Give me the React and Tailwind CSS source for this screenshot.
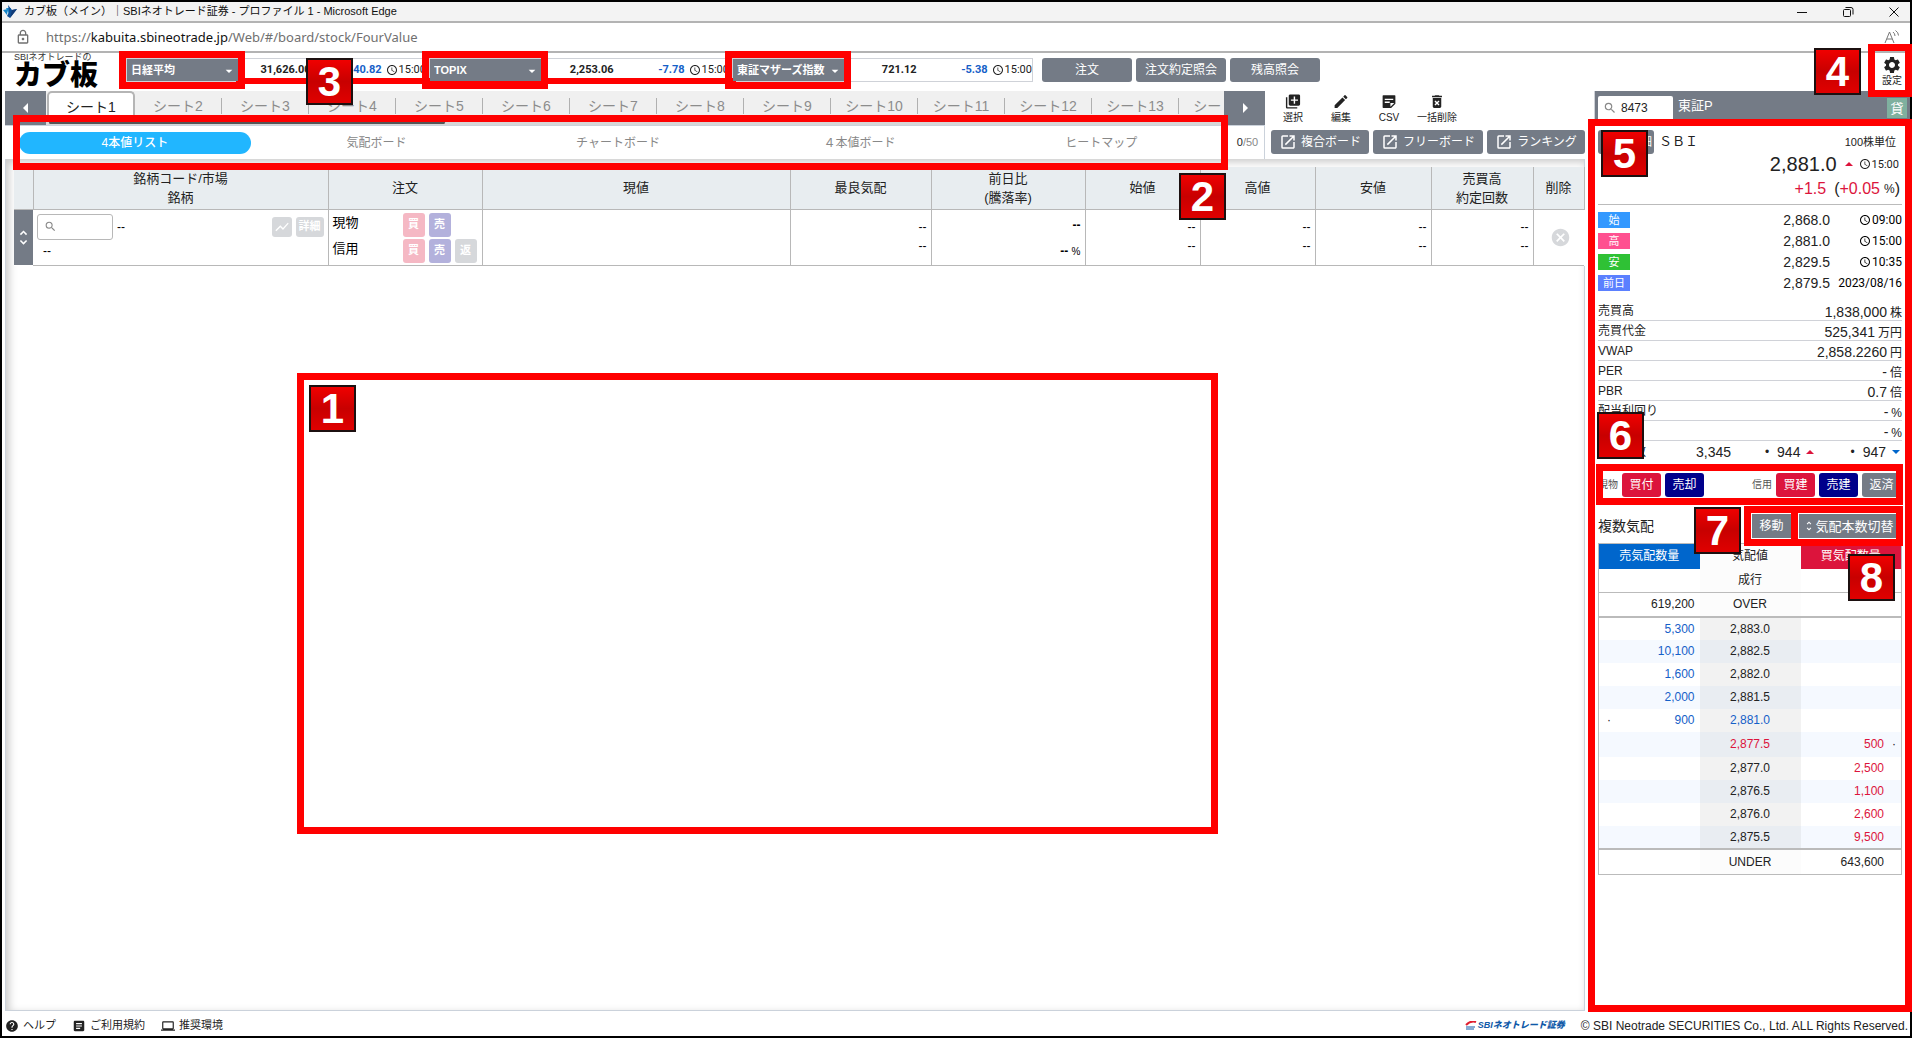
import React from "react";
import {
  MdLibraryAdd, MdEdit, MdDeleteForever, MdAccessTime, MdSettings, MdSearch, MdOpenInNew,
  MdHelp, MdArticle, MdLaptop, MdShowChart, MdUnfoldMore, MdCancel, MdArrowLeft, MdArrowRight,
  MdArrowDropDown, MdOutlineLock,
} from "react-icons/md";

const INDICES = [
  { id: "nikkei", name: "日経平均", value: "31,626.00", change: "-140.82" },
  { id: "topix", name: "TOPIX", value: "2,253.06", change: "-7.78" },
  { id: "mothers", name: "東証マザーズ指数", value: "721.12", change: "-5.38" },
];
const SHEETS = Array.from({ length: 14 }, (_, i) => `シート${i + 1}`);
const VIEWS = ["4本値リスト", "気配ボード", "チャートボード", "４本値ボード", "ヒートマップ"];
const OHLC = [
  { label: "始", value: "2,868.0", time: "09:00", color: "bg-[#3399ff]" },
  { label: "高", value: "2,881.0", time: "15:00", color: "bg-[#ff5090]" },
  { label: "安", value: "2,829.5", time: "10:35", color: "bg-[#2fc135]" },
  { label: "前日", value: "2,879.5", date: "2023/08/16", color: "bg-[#5b80ff]" },
];
const STATS = [
  ["売買高", "1,838,000", "株"],
  ["売買代金", "525,341", "万円"],
  ["VWAP", "2,858.2260", "円"],
  ["PER", "-", "倍"],
  ["PBR", "0.7", "倍"],
  ["配当利回り", "-", "%"],
  ["ROE", "-", "%"],
];
const ASKS = [["5,300", "2,883.0"], ["10,100", "2,882.5"], ["1,600", "2,882.0"], ["2,000", "2,881.5"], ["900", "2,881.0"]];
const BIDS = [["2,877.5", "500"], ["2,877.0", "2,500"], ["2,876.5", "1,100"], ["2,876.0", "2,600"], ["2,875.5", "9,500"]];

function Badge({ n, className }) {
  return (
    <span
      className={`absolute z-30 flex size-[47px] items-center justify-center border-2 border-[#1c1010] bg-linear-to-b from-[#f00000] via-[#c80000] to-[#e00000] font-['Liberation_Sans'] text-[42px] leading-none font-bold text-white ${className}`}
    >
      {n}
    </span>
  );
}

function Frame({ className }) {
  return <span aria-hidden="true" className={`pointer-events-none absolute z-20 border-[7px] border-[#ff0000] ${className}`} />;
}

function Clock() {
  return <MdAccessTime className="mr-px size-3 shrink-0" />;
}

function CsvIcon() {
  return (
    <svg viewBox="0 0 24 24" className="size-[18px]" fill="currentColor">
      <path fillRule="evenodd" d="M4 3h16a1 1 0 0 1 1 1v11l-6 6H4a1 1 0 0 1-1-1V4a1 1 0 0 1 1-1zm2 5v2h12V8zm0 4v2h7v-2zm8 7.5 5.500-5.500H14z" />
    </svg>
  );
}

function EdgeIcon() {
  return (
    <svg viewBox="0 0 14 14" className="size-[14px]">
      <path d="M3 3h5l-2 6z" fill="#1b8fd0" />
      <path d="M0 5l5-1-1 6z" fill="#1686c9" />
      <path d="M5 0l4 5 5-1-7 9-3-2 2-4z" fill="#0f4f96" />
      <path d="M9 5l5-1-7 9z" fill="#123c78" />
    </svg>
  );
}

function TitleBar() {
  return (
    <div className="flex h-[21px] shrink-0 items-center border-b-2 border-[#b3b3b3] bg-[#f3f3f3] pl-px text-[11px] text-[#111]">
      <EdgeIcon />
      <span className="ml-[7px] flex-1 whitespace-nowrap">カブ板（メイン）｜SBIネオトレード証券 - プロファイル 1 - Microsoft Edge</span>
      <div className="flex gap-8 pr-[9px]">
        <button aria-label="最小化" className="flex size-[14px] items-center justify-center">
          <svg viewBox="0 0 12 12" className="size-3" stroke="#111" fill="none"><path d="M1 6.500h10" /></svg>
        </button>
        <button aria-label="元に戻す" className="flex size-[14px] items-center justify-center">
          <svg viewBox="0 0 12 12" className="size-3" stroke="#111" fill="none">
            <rect x="1.500" y="3.500" width="7" height="7" rx="1" /><path d="M3.500 1.500H9a2 2 0 0 1 2 2v5" />
          </svg>
        </button>
        <button aria-label="閉じる" className="flex size-[14px] items-center justify-center">
          <svg viewBox="0 0 12 12" className="size-3" stroke="#111" fill="none"><path d="M1.500 1.500l9 9M10.500 1.500l-9 9" /></svg>
        </button>
      </div>
    </div>
  );
}

function AddressBar() {
  return (
    <div className="flex h-[30px] shrink-0 items-center border-b-2 border-[#b3b3b3] bg-white pr-[10px] pl-[13px] text-[#707070]">
      <MdOutlineLock className="size-4" />
      <a href="#board" className="ml-[15px] flex-1 pt-px font-['Noto_Sans'] text-[13px]">
        https://<span className="text-[#111]">kabuita.sbineotrade.jp</span>/Web/#/board/stock/FourValue
      </a>
      <button aria-label="音声で読み上げる">
        <svg viewBox="0 0 16 16" className="size-4" stroke="#777" fill="none">
          <path d="M1 14 5.500 3 10 14M2.800 10h5.500M9 3q2 1.500 2 4M11.500 1.500q3 2 3 5" />
        </svg>
      </button>
    </div>
  );
}

function IndexTicker({ item }) {
  return (
    <div className="relative flex h-6 w-[301px] border border-[#cfd2d8] font-['Roboto'] text-[11px]">
      <div className="relative z-10 w-[111px] text-white">
        <select aria-label="指数" id={item.id} defaultValue={item.name} className="h-full w-full appearance-none bg-[#747b86] pl-1 font-['Liberation_Sans','Noto_Sans_CJK_JP',sans-serif] font-bold outline-none">
          <option>{item.name}</option>
        </select>
        <MdArrowDropDown className="pointer-events-none absolute top-1 right-px size-4" />
      </div>
      <div className="flex flex-1 items-center whitespace-nowrap">
        <span className="w-[73px] text-right font-bold text-[#222]">{item.value}</span>
        <span className="w-[71px] text-right font-bold text-[#1560c8]">{item.change}</span>
        <span className="ml-1 flex items-center text-[#222]"><Clock />15:00</span>
      </div>
      <Frame className="-top-[8px] -left-[8px] h-[38px] w-[126px]" />
    </div>
  );
}

function AppHeader() {
  return (
    <header className="relative flex h-[38px] shrink-0 items-start">
      <h1 className="flex w-[124px] shrink-0 flex-col pl-3">
        <span className="text-[9px] leading-[8px] whitespace-nowrap text-[#333]">SBIネオトレードの</span>
        <span className="text-[28px] leading-[30px] font-black whitespace-nowrap text-black">カブ板</span>
      </h1>
      <div className="relative mt-[5px] flex gap-[2px]">
        <span aria-hidden="true" className="absolute top-[20px] left-[110px] z-10 h-[6px] w-[500px] bg-[#ff0000]" />
        {INDICES.map((i) => <IndexTicker key={i.id} item={i} />)}
        <Badge n="3" className="top-0 left-[180px]" />
      </div>
      <div className="mt-[5px] ml-[9px] flex gap-1">
        {["注文", "注文約定照会", "残高照会"].map((t) => (
          <button key={t} className="h-6 w-[90px] rounded-[3px] bg-[#747b86] text-xs leading-none text-white">{t}</button>
        ))}
      </div>
      <button className="absolute top-[2px] right-[8px] flex flex-col items-center text-[10px] leading-[12px] text-[#222]">
        <MdSettings className="size-5" />設定
      </button>
      <Frame className="-top-[9px] -right-[2px] h-[53px] w-[44px]" />
      <Badge n="4" className="-top-[5px] right-[49px]" />
    </header>
  );
}

function SheetTabs() {
  const arrow = "flex h-[34px] w-[41px] shrink-0 items-center justify-center bg-[#747b86] text-white";
  return (
    <div className="flex h-[34px]">
      <button aria-label="前へ" className={arrow}><MdArrowLeft className="size-6" /></button>
      <div className="flex min-w-0 flex-1 flex-col overflow-hidden bg-[#f0f0f0]">
        <div role="tablist" className="flex h-[30px] pl-px">
          {SHEETS.map((s, i) => (
            <button
              key={s}
              role="tab"
              aria-selected={i === 0}
              className={i === 0
                ? "h-full w-[88px] shrink-0 rounded-t-[5px] border-2 border-b-0 border-[#b5b5b5] bg-white text-sm leading-none text-[#222]"
                : "flex h-full w-[87px] shrink-0 items-center justify-center text-sm leading-none text-[#8c8c8c]"}
            >
              {i === 0 ? s : <span className="w-full border-r border-[#b0b0b0] py-px">{s}</span>}
            </button>
          ))}
        </div>
        <div className="h-1 bg-[#d6d6d6]"><div className="ml-[3px] h-[3px] w-[396px] rounded-full bg-[#555]" /></div>
      </div>
      <button aria-label="次へ" className={arrow}><MdArrowRight className="size-6" /></button>
    </div>
  );
}

function ViewTabs() {
  return (
    <div className="flex h-[34px] items-center border-t border-r border-[#cbd2db] bg-white pl-[9px]">
      <div role="tablist" className="flex flex-1">
        {VIEWS.map((v, i) => (
          <button
            key={v}
            role="tab"
            aria-selected={i === 0}
            className={i === 0
              ? "mx-[5px] h-[22px] flex-1 rounded-full bg-[#21b6ff] text-xs leading-none font-medium text-white"
              : "mx-[5px] h-[22px] flex-1 text-xs leading-none text-[#888]"}
          >
            {v}
          </button>
        ))}
      </div>
      <span className="w-[42px] pl-[9px] text-center text-[11px] text-[#888]"><span className="text-[#222]">0</span>/50</span>
    </div>
  );
}

function Toolbar() {
  const tools = [
    ["選択", <MdLibraryAdd className="size-[18px]" />],
    ["編集", <MdEdit className="size-[18px]" />],
    ["CSV", <CsvIcon />],
    ["一括削除", <MdDeleteForever className="size-[18px]" />],
  ];
  const btn = "flex h-6 items-center justify-center gap-1 rounded-[3px] bg-[#747b86] text-xs leading-none whitespace-nowrap text-white";
  return (
    <div className="w-[320px] shrink-0">
      <div className="flex h-[34px] pl-1">
        {tools.map(([t, icon]) => (
          <button key={t} className="flex w-12 flex-col items-center gap-px pt-[2px] text-[10px] leading-[14px] whitespace-nowrap text-[#222]">{icon}{t}</button>
        ))}
      </div>
      <div className="flex h-[34px] items-center gap-1 border-b border-transparent pl-[6px]">
        <button className={`${btn} w-[98px]`}><MdOpenInNew className="size-[18px]" />複合ボード</button>
        <button className={`${btn} w-[110px]`}><MdOpenInNew className="size-[18px]" />フリーボード</button>
        <button className={`${btn} w-[98px]`}><MdOpenInNew className="size-[18px]" />ランキング</button>
      </div>
    </div>
  );
}

function Chip({ children, className }) {
  return <button className={`h-6 w-[22px] rounded-[3px] text-[11px] leading-none font-bold text-white ${className}`}>{children}</button>;
}

function QuoteTable() {
  const th = "h-[42px] border-r border-b border-[#b8b8b8] bg-[#e8edf0] p-0 text-[13px] leading-[19px] font-normal text-[#222]";
  const td = "border-r border-b border-[#b8b8b8] py-0 px-1 align-top text-right text-xs leading-[19px]";
  return (
    <table className="w-full table-fixed border-collapse bg-white">
      <colgroup>
        <col className="w-[19px]" /><col className="w-[295px]" /><col className="w-[154px]" /><col className="w-[308px]" />
        <col className="w-[141px]" /><col className="w-[154px]" /><col className="w-[115px]" /><col className="w-[115px]" />
        <col className="w-[116px]" /><col className="w-[102px]" /><col className="w-[51px]" />
      </colgroup>
      <thead>
        <tr>
          <th className={th} aria-label="並べ替え" />
          <th className={th}>銘柄コード/市場<br />銘柄</th>
          <th className={th}>注文</th>
          <th className={th}>現値</th>
          <th className={th}>最良気配</th>
          <th className={th}>前日比<br />(騰落率)</th>
          <th className={th}>始値</th>
          <th className={th}>高値</th>
          <th className={th}>安値</th>
          <th className={th}>売買高<br />約定回数</th>
          <th className={th}>削除</th>
        </tr>
      </thead>
      <tbody>
        <tr className="h-14">
          <td className="bg-[#747b86] text-white"><MdUnfoldMore className="mx-auto size-[19px]" /></td>
          <td className="border-r border-b border-[#b8b8b8] px-1 py-0 align-top text-xs">
            <div className="flex items-center gap-1 pt-1">
              <label className="flex h-[26px] w-[76px] items-center rounded-[3px] border border-[#b8b8b8] pl-[6px] text-[#888]">
                <MdSearch className="size-[13px] shrink-0" />
                <input aria-label="銘柄コード" className="w-full min-w-0 outline-none" />
              </label>
              <span className="flex-1">--</span>
              <button aria-label="チャート" className="flex h-5 w-5 items-center justify-center rounded-[3px] bg-[#d6d8db] text-white"><MdShowChart className="size-4" /></button>
              <button className="h-5 w-7 rounded-[3px] bg-[#d6d8db] text-[11px] leading-none font-bold whitespace-nowrap text-white">詳細</button>
            </div>
            <div className="pl-[6px] leading-[22px]">--</div>
          </td>
          <td className="border-r border-b border-[#b8b8b8] px-1 py-0 align-top text-[13px]">
            <div className="flex flex-col gap-[2px] pt-[3px]">
              <div className="flex h-6 gap-1"><span className="w-[66px]">現物</span><Chip className="bg-[#f5b8c4]">買</Chip><Chip className="bg-[#b3b1dc]">売</Chip></div>
              <div className="flex h-6 gap-1"><span className="w-[66px]">信用</span><Chip className="bg-[#f5b8c4]">買</Chip><Chip className="bg-[#b3b1dc]">売</Chip><Chip className="bg-[#d6d8db]">返</Chip></div>
            </div>
          </td>
          <td className={td} />
          <td className={td}><div className="pt-2">--<br />--</div></td>
          <td className={td}><div className="pt-[2px] leading-[26px]"><span className="font-bold">--</span><br /><span className="font-bold">--</span> <span className="text-[10px]">%</span></div></td>
          <td className={td}><div className="pt-2">--<br />--</div></td>
          <td className={td}><div className="pt-2">--<br />--</div></td>
          <td className={td}><div className="pt-2">--<br />--</div></td>
          <td className={td}><div className="pt-2">--<br />--</div></td>
          <td className="border-b border-[#b8b8b8] py-0 pr-0 pl-1"><button aria-label="削除" className="mx-auto block text-[#d6d8db]"><MdCancel className="size-[21px]" /></button></td>
        </tr>
      </tbody>
    </table>
  );
}

function Board() {
  return (
    <section className="mr-[9px] ml-[3px] flex min-w-0 flex-1 flex-col">
      <div className="relative flex">
        <div className="relative min-w-0 flex-1">
          <SheetTabs />
          <ViewTabs />
          <Frame className="top-6 right-[37px] left-2 h-[55px]" />
        </div>
        <Toolbar />
      </div>
      <div className="relative flex-1 border-x border-b border-[#cbd2db] pt-2 pl-2 shadow-[inset_3px_3px_8px_rgba(0,0,0,0.22)]">
        <QuoteTable />
        <Badge n="2" className="top-[14px] right-[358px]" />
        <div className="absolute top-[214px] right-[366px] left-[291px] z-20 h-[461px] border-[7px] border-[#ff0000]">
          <Badge n="1" className="top-[5px] left-[5px]" />
        </div>
      </div>
    </section>
  );
}

function DepthTable() {
  const mid = (i) => (i % 2 ? "bg-[#e9edf2]" : "bg-[#f2f2f2]");
  return (
    <table className="w-full table-fixed border-collapse border border-[#bbb] text-xs text-[#222]">
      <thead>
        <tr className="h-[25px]">
          <th className="bg-[#0066cc] p-0 font-normal text-white">売気配数量</th>
          <th className="bg-[#fcfcfc] p-0 font-normal">気配値</th>
          <th className="bg-[#dc143c] p-0 font-normal text-white">買気配数量</th>
        </tr>
      </thead>
      <tbody>
        <tr className="h-[24px] border-b border-[#bbb]"><td /><td className="bg-[#fcfcfc] p-0 text-center">成行</td><td /></tr>
        <tr className="h-[24px] border-b-2 border-[#bbb]"><td className="pr-[5px] text-right">619,200</td><td className="bg-[#fcfcfc] p-0 text-center">OVER</td><td /></tr>
        {ASKS.map(([q, p], i) => (
          <tr key={p} className={i % 2 ? "h-[23px] bg-[#f5f9ff]" : "h-[23px]"}>
            <td className="pr-[5px] text-[#1560c8]">
              <div className="flex justify-between pl-2"><span className="text-[#222]">{i === 4 ? "·" : ""}</span>{q}</div>
            </td>
            <td className={`text-center ${mid(i)} ${i === 4 ? "text-[#1560c8]" : ""}`}>{p}</td>
            <td />
          </tr>
        ))}
        {BIDS.map(([p, q], i) => (
          <tr key={p} className={i === 0 ? "h-[25px] bg-[#f5f9ff]" : i % 2 ? "h-[23px]" : "h-[23px] bg-[#f5f9ff]"}>
            <td />
            <td className={`text-center ${mid(i + 1)} ${i === 0 ? "text-[#dc143c]" : ""}`}>{p}</td>
            <td className="text-[#dc143c]"><div className="flex justify-end">{q}<span className="w-[17px] pl-2 text-[#222]">{i === 0 ? "·" : ""}</span></div></td>
          </tr>
        ))}
        <tr className="h-[26px] border-t-2 border-[#bbb]"><td /><td className="bg-[#fcfcfc] p-0 text-center">UNDER</td><td className="pr-[17px] text-right">643,600</td></tr>
      </tbody>
    </table>
  );
}

function StockPanel() {
  const order = "h-6 w-[39px] rounded-[3px] text-xs leading-none text-white";
  return (
    <aside className="relative w-[316px] shrink-0 border-l border-[#cfd2d8] text-[#222]">
      <div className="flex h-[29px] items-end bg-[#747b86] pl-[3px]">
        <label className="flex h-6 w-[75px] items-center rounded-t-[2px] bg-white pl-[5px] text-[#888]">
          <MdSearch className="size-[14px] shrink-0" />
          <input aria-label="銘柄コード" defaultValue="8473" className="ml-1 w-full min-w-0 font-['Liberation_Sans'] text-xs text-[#222] outline-none" />
        </label>
        <span className="flex-1 self-center pl-[5px] text-[13px] leading-none text-white">東証P</span>
        <span className="mr-[3px] mb-[2px] flex size-5 items-center justify-center bg-[#7fb09f] text-[13px] leading-none text-white">貸</span>
      </div>
      <div className="pr-2 pl-[3px]">
        <div className="mt-[10px] flex h-6 items-center">
          <button className="flex h-6 w-14 items-center justify-between rounded-[3px] bg-[#747b86] px-[2px] text-xs leading-none text-white"><MdShowChart className="size-4" />詳細</button>
          <span className="ml-[5px] flex-1 text-[13px]">ＳＢＩ</span>
          <span className="pr-[6px] text-[11px]">100株単位</span>
        </div>
        <div className="flex h-[20px] items-center justify-end pr-[3px]">
          <span className="text-xl leading-none">2,881.0</span>
          <svg viewBox="0 0 8 4" className="mr-[6px] ml-2 h-1 w-2" fill="#dc143c"><path d="M4 0 8 4H0z" /></svg>
          <span className="flex items-center font-['Roboto'] text-[11px] leading-none"><Clock />15:00</span>
        </div>
        <div className="flex h-[31px] items-center justify-end border-b border-[#bbb] text-base text-[#dc143c]">
          <span className="mr-2">+1.5</span><span className="text-[#222]">(</span>+0.05<span className="ml-1 text-xs text-[#222]">%</span><span className="mr-[2px] text-[#222]">)</span>
        </div>
        <div className="mt-[7px] flex flex-col gap-[5px]">
          {OHLC.map((r) => (
            <div key={r.label} className="flex h-4 items-center">
              <span className={`flex h-4 w-8 items-center justify-center text-[11px] text-white ${r.color}`}>{r.label}</span>
              <span className="flex-1 text-right text-sm">{r.value}</span>
              <span className="flex w-[72px] items-center justify-end font-['Roboto'] text-xs text-black">{r.time ? <><Clock />{r.time}</> : r.date}</span>
            </div>
          ))}
        </div>
        <dl className="mt-[10px]">
          {STATS.map(([k, v, u]) => (
            <div key={k} className="flex h-5 items-center border-b border-[#d0d2d8]">
              <dt className="flex-1 text-xs leading-none">{k}</dt>
              <dd className="flex items-baseline gap-[3px] pt-[2px] text-sm leading-none">{v}<span className="text-xs leading-none">{u}</span></dd>
            </div>
          ))}
        </dl>
        <div className="flex h-[22px] items-center text-sm">
          <span className="w-[98px] text-xs">約定回数</span>
          <span className="flex-1">3,345</span>
          <span className="mr-2 text-xs">•</span><span>944</span>
          <svg viewBox="0 0 8 4" className="mr-9 ml-[6px] h-1 w-2" fill="#dc143c"><path d="M4 0 8 4H0z" /></svg>
          <span className="mr-2 text-xs">•</span><span>947</span>
          <svg viewBox="0 0 8 4" className="mr-[2px] ml-[6px] h-1 w-2" fill="#0066cc"><path d="M0 0h8L4 4z" /></svg>
        </div>
        <div className="relative mt-[8px] flex h-[27px] items-center gap-1 pr-px">
          <span className="w-5 text-[10px] whitespace-nowrap text-[#555]">現物</span>
          <button className={`${order} bg-[#dc143c]`}>買付</button>
          <button className={`${order} bg-[#00008b]`}>売却</button>
          <span className="flex-1 text-right text-[10px] text-[#555]">信用</span>
          <button className={`${order} bg-[#dc143c]`}>買建</button>
          <button className={`${order} bg-[#00008b]`}>売建</button>
          <button className={`${order} bg-[#747b86]`}>返済</button>
          <Frame className="-top-[7px] -right-px -left-[2px] h-[41px]" />
        </div>
        <div className="relative mt-[15px] flex h-[26px] items-center">
          <h2 className="flex-1 text-sm">複数気配</h2>
          <button className="h-6 w-[39px] bg-[#747b86] text-xs leading-none text-white">移動</button>
          <button className="ml-2 flex h-6 w-[103px] items-center justify-center bg-[#747b86] pr-1 text-[13px] leading-none whitespace-nowrap text-white">
            <MdUnfoldMore className="size-3" />気配本数切替
          </button>
          <Frame className="-top-[7px] right-[104px] h-[40px] w-[54px]" />
          <Frame className="-top-[7px] -right-px h-[40px] w-[112px]" />
          <Badge n="7" className="-top-[6px] right-[161px]" />
        </div>
        <div className="mt-[4px]">
          <DepthTable />
        </div>
      </div>
      <Frame className="top-[28px] -right-[2px] -bottom-px -left-[7px]" />
      <Badge n="5" className="top-[39px] left-[6px]" />
      <Badge n="6" className="top-[321px] left-[2px]" />
      <Badge n="8" className="top-[463px] right-[15px]" />
    </aside>
  );
}

function AppFooter() {
  return (
    <footer className="relative flex h-[25px] shrink-0 items-center pt-1 pr-[2px] pl-[3px] text-[11px] text-[#222]">
      <a href="#help" className="flex items-center gap-1"><MdHelp className="size-[14px]" />ヘルプ</a>
      <a href="#terms" className="ml-4 flex items-center gap-1"><MdArticle className="size-[14px]" />ご利用規約</a>
      <a href="#environment" className="ml-4 flex items-center gap-1"><MdLaptop className="size-[14px]" />推奨環境</a>
      <a href="#top" className="ml-auto flex items-center gap-px text-[9px] font-black whitespace-nowrap text-[#1059a8] italic">
        <svg viewBox="0 0 12 10" className="h-[10px] w-3" fill="none"><path d="M1 4q5-5 10-3" stroke="#e02030" strokeWidth="2" /><path d="M1 6h9M1 8h8" stroke="#1059a8" /></svg>
        SBIネオトレード証券
      </a>
      <small className="ml-4 font-['Liberation_Sans'] text-xs whitespace-nowrap">© SBI Neotrade SECURITIES Co., Ltd. ALL Rights Reserved.</small>
    </footer>
  );
}

export default function App() {
  return (
    <div className="flex h-screen min-h-[920px] flex-col bg-black p-[2px] font-['Liberation_Sans','Noto_Sans_CJK_JP',sans-serif]">
      <div className="flex min-h-0 flex-1 flex-col bg-white">
        <TitleBar />
        <AddressBar />
        <AppHeader />
        <main className="flex min-h-0 flex-1">
          <Board />
          <StockPanel />
        </main>
        <AppFooter />
      </div>
    </div>
  );
}
